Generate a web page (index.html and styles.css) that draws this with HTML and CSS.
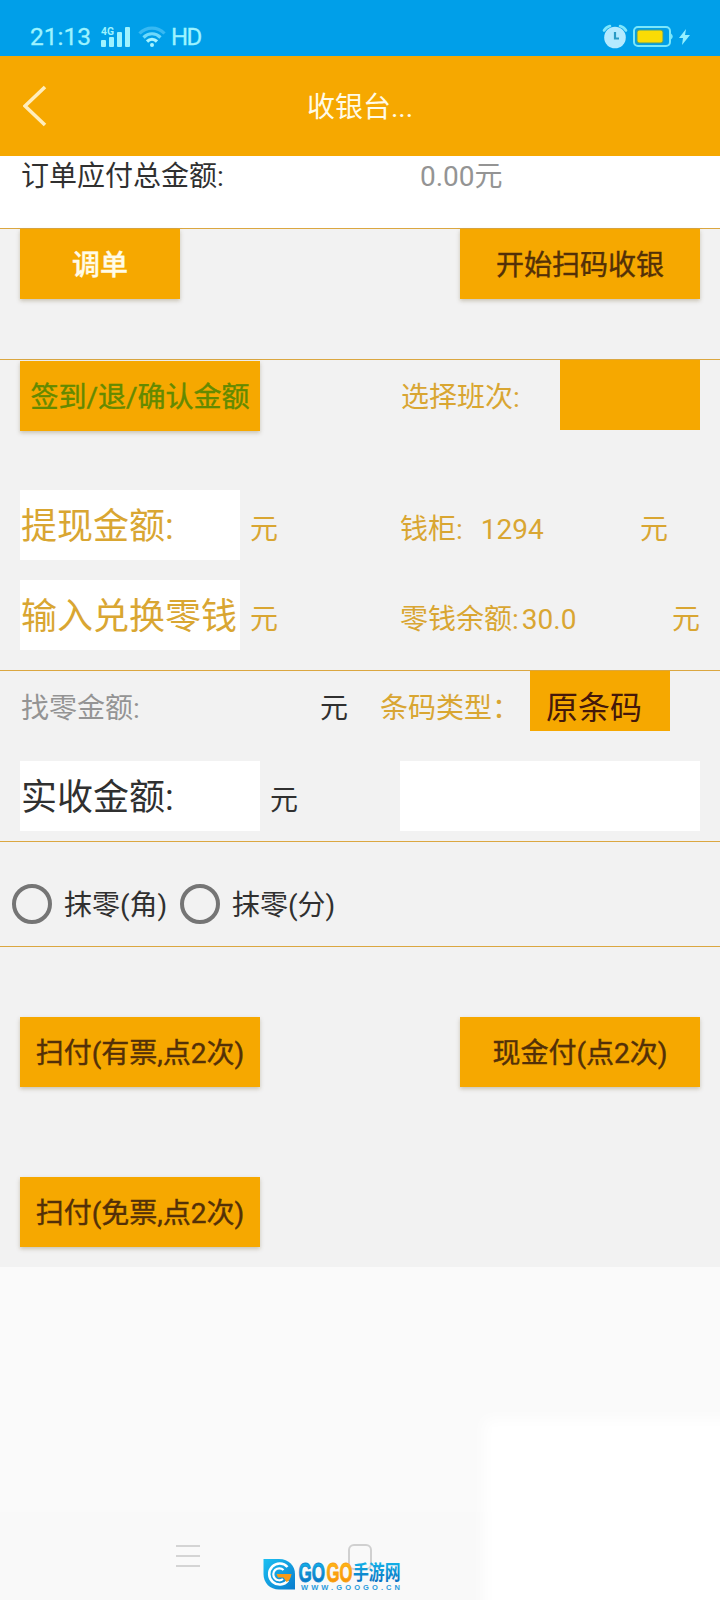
FILE: index.html
```html
<!DOCTYPE html>
<html lang="zh-CN">
<head>
<meta charset="utf-8">
<title>收银台</title>
<link rel="stylesheet" href="styles.css">
</head>
<body>
<div class="status">
  <span class="clock">21:13</span>
  <svg class="signal" width="30" height="22" viewBox="0 0 30 22">
    <text x="0" y="8.6" class="net" textLength="13" lengthAdjust="spacingAndGlyphs">4G</text>
    <rect x="0" y="14" width="5" height="7" rx="1"/><rect x="8" y="11" width="5" height="10" rx="1"/><rect x="16" y="6" width="5" height="15" rx="1"/><rect x="24" y="1" width="5" height="20" rx="1"/>
  </svg>
  <svg class="wifi" width="28" height="22" viewBox="0 0 28 22" fill="none" stroke-width="3.2">
    <path d="M1.500 7.500C8.500 .2 19.500 .2 26.500 7.500" stroke="#37b9f3"/>
    <path d="M5.500 11.500C10.500 6.500 17.500 6.500 22.500 11.500" stroke="#6fd9fb"/>
    <path d="M9 15.500C12 12.600 16 12.600 19 15.500" stroke="#a9f5ff"/>
    <circle cx="14" cy="19" r="2" fill="#a9f5ff"/>
  </svg>
  <span class="hd">HD</span>
  <svg class="power" width="92" height="28" viewBox="0 0 92 28">
    <circle cx="13" cy="15.500" r="10.800" fill="#b4eaff"/>
    <path d="M2 8.500 Q4 5 8 4M18 4Q22 5 24 8.500" fill="none" stroke="#7fe6fb" stroke-width="2.600" stroke-linecap="round"/>
    <path d="M13 10v6.500h4" fill="none" stroke="#2a9bc5" stroke-width="2.200"/>
    <rect x="32" y="5" width="36" height="19" rx="4" fill="none" stroke="#7be7fa" stroke-width="2"/>
    <path d="M69 11.500q3.500 3 0 6z" fill="#7be7fa"/>
    <rect x="34.500" y="7.500" width="27" height="14" rx="2.500" fill="#4b9e83"/><rect x="35.500" y="8.500" width="25" height="12" rx="2" fill="#fadb05"/>
    <path d="M84 7 77 16h4l-1 7 8-10h-5z" fill="#93f0ff"/>
  </svg>
</div>
<header class="header">
  <svg class="back" width="24" height="42" viewBox="0 0 24 42"><path d="M22 2 2 21 22 40" fill="none" stroke="#ffedbd" stroke-width="3.600"/></svg>
  <h1 class="title">收银台...</h1>
</header>
<main class="main">
  <section class="total"><span class="total-label">订单应付总金额:</span><span class="muted">0.00元</span></section>
  <section class="section order">
    <button class="btn btn-small">调单</button>
    <button class="btn dark">开始扫码收银</button>
  </section>
  <section class="section shift">
    <div class="row">
      <button class="btn btn-sign">签到/退/确认金额</button>
      <div class="half gold"><span class="shift-label">选择班次:</span><span class="picker"></span></div>
    </div>
    <div class="row withdraw">
      <span class="field">提现金额:</span><span class="unit">元</span>
      <div class="half gold low"><span>钱柜:</span><span class="drawer">1294</span><span class="drawer-unit">元</span></div>
    </div>
    <div class="row change">
      <span class="field">输入兑换零钱</span><span class="unit">元</span>
      <div class="half gold low"><span>零钱余额:</span><span class="balance">30.0</span><span class="balance-unit">元</span></div>
    </div>
  </section>
  <section class="section pay">
    <div class="row coderow">
      <span class="muted refund">找零金额:</span><span class="refund-unit">元</span>
      <span class="codelabel">条码类型：</span><span class="codetype">原条码</span>
    </div>
    <div class="row received">
      <span class="field wide">实收金额:</span><span class="unit ink">元</span>
      <span class="code-input"></span>
    </div>
  </section>
  <section class="section rounding">
    <span class="radio"></span><span class="radio-label">抹零(角)</span>
    <span class="radio"></span><span class="radio-label">抹零(分)</span>
  </section>
  <section class="section actions">
    <div class="pair"><button class="btn dark">扫付(有票,点2次)</button><button class="btn dark">现金付(点2次)</button></div>
    <div class="pair"><button class="btn dark">扫付(免票,点2次)</button></div>
  </section>
</main>
<footer class="footer">
  <nav class="nav">
    <svg class="menu" width="24" height="26" viewBox="0 0 24 26" stroke="#d4d4d4" stroke-width="2"><path d="M0 3h24M0 13h24M0 23h24"/></svg>
    <svg class="home" width="26" height="28" viewBox="0 0 26 28"><rect x="2" y="2" width="22" height="24" rx="5" fill="none" stroke="#d0d0d0" stroke-width="2"/></svg>
  </nav>
  <div class="glow"></div>
  <svg class="brand" width="140" height="34" viewBox="0 0 140 34">
    <defs>
      <linearGradient id="blue" x1="0" y1="0" x2="0" y2="1"><stop offset=".15" stop-color="#14b5ea"/><stop offset="1" stop-color="#0864b8"/></linearGradient>
      <linearGradient id="sky" x1="0" y1="0" x2="1" y2="1"><stop offset="0" stop-color="#1cc0f2"/><stop offset="1" stop-color="#0a7ccd"/></linearGradient>
      <linearGradient id="gold" x1="0" y1="0" x2="0" y2="1"><stop offset=".15" stop-color="#ffb917"/><stop offset="1" stop-color="#f58a05"/></linearGradient>
    </defs>
    <path d="M.5 1H16C26 1 32 8 32 16V31.500H16C7 31.500 .5 25 .5 16z" fill="url(#sky)"/>
    <path d="M24.500 9A10.500 10.500 0 1 0 25 22.500" fill="none" stroke="#fff" stroke-width="2.600"/>
    <path d="M20.500 12A6 6 0 1 0 20 21" fill="none" stroke="#fff" stroke-width="2.200"/>
    <path d="M13.500 16H28.500C28 20 26 23 23.500 24L20.500 19.500H15z" fill="#f99a16"/>
    <g class="brand-name">
      <text x="35.500" y="24" fill="url(#blue)" stroke="#0d87cf" textLength="26.500" lengthAdjust="spacingAndGlyphs">GO</text>
      <text x="63.500" y="24" fill="url(#gold)" stroke="#faa010" textLength="26" lengthAdjust="spacingAndGlyphs">GO</text>
    </g>
    <text class="brand-cn" x="90" y="22" fill="url(#blue)" textLength="47.500" lengthAdjust="spacingAndGlyphs">手游网</text>
    <text class="brand-url" x="38" y="31.500" textLength="99">WWW.GOOGO.CN</text>
  </svg>
</footer>
</body>
</html>
```
FILE: styles.css
```css
* { box-sizing: border-box; }
body {
  margin: 0;
  width: 720px;
  height: 1600px;
  overflow: hidden;
  background: #fafafa;
  color: #303030;
  font: 28px/32px Roboto, "Noto Sans CJK SC", sans-serif;
  white-space: nowrap;
}
.status { height: 56px; padding: 17px 26px 0 30px; display: flex; align-items: center; background: #009fe9; color: #9df3ff; }
.clock { font-size: 24.5px; width: 71px; -webkit-text-stroke: .3px; }
.signal { fill: #9df3ff; }
.net { font: bold 11px Roboto, sans-serif; }
.wifi { margin-left: 7px; }
.hd { font-size: 24px; margin-left: 5px; letter-spacing: -1.5px; -webkit-text-stroke: .3px; }
.power { margin: -2px 0 0 auto; }
.header { height: 100px; padding: 0 23px; display: grid; grid-template-columns: 24px 1fr 24px; align-items: center; background: #f6a800; }
.title { margin: 0; padding-top: 4px; font-size: 28px; font-weight: 400; text-align: center; color: #fffbe8; }
.total { height: 72px; padding: 5px 20px 0; display: flex; background: #fff; }
.total-label { width: 400px; padding-left: 1px; }
.muted { color: #949494; }
.section { border-top: 1px solid #dba741; background: #f2f2f2; }
.btn { width: 240px; height: 70px; padding: 4px 0 0; border: 0; background: #f6a800; font: inherit; -webkit-text-stroke: .4px; box-shadow: 0 2px 4px rgba(80, 60, 0, .25); }
.btn-small { width: 160px; color: #fffbe8; font-weight: 500; }
.btn-sign { color: #638a00; margin-top: 1px; }
.dark { color: #533008; }
.order { height: 131px; padding: 0 20px; display: flex; justify-content: space-between; }
.shift { height: 311px; padding-left: 20px; }
.row { display: flex; align-items: center; }
.shift > .row { height: 70px; }
.half { width: 320px; height: 70px; margin: 0 0 0 auto; display: flex; align-items: center; }
.shift-label { padding: 5px 0 0 1px; }
.gold { color: #d9a632; }
.low { padding-top: 9px; }
.picker { width: 140px; height: 70px; margin: 0 20px 0 auto; background: #f6a800; }
.withdraw { margin-top: 60px; }
.change { margin-top: 20px; }
.field { width: 220px; height: 70px; padding: 2px 0 0 1px; background: #fff; font-size: 36px; line-height: 70px; color: #d9a632; }
.unit { margin: 9px 0 0 10px; color: #d9a632; }
.drawer { margin-left: 18px; }
.drawer-unit { margin: 0 52px 0 auto; }
.balance { margin-left: 3px; }
.balance-unit { margin: 0 20px 0 auto; }
.pay { height: 171px; padding-left: 20px; }
.coderow { height: 60px; }
.refund { width: 300px; padding: 16px 0 0 1px; }
.refund-unit { width: 60px; padding-top: 16px; }
.codelabel { width: 150px; padding-top: 16px; color: #d9a632; }
.codetype { width: 140px; height: 60px; padding: 7px 0 0 16px; background: #f6a800; color: #45180a; font-size: 32px; line-height: 60px; }
.received { margin-top: 30px; }
.wide { width: 240px; color: #303030; }
.ink { color: #303030; }
.code-input { width: 300px; height: 70px; margin: 0 20px 0 auto; background: #fff; }
.rounding { height: 105px; padding: 20px 0 0 12px; display: flex; align-items: center; }
.radio { width: 40px; height: 40px; border: 4px solid #757575; border-radius: 50%; }
.radio-label { width: 128px; padding: 4px 0 0 12px; }
.actions { height: 321px; padding: 70px 20px 0; display: grid; grid-template-rows: 70px 70px; gap: 90px; }
.pair { display: flex; justify-content: space-between; }
.footer { position: relative; height: 333px; padding-top: 245px; }
.glow { position: absolute; left: 492px; top: 160px; width: 260px; height: 220px; background: #fff; box-shadow: 0 0 14px 8px #fff; }
.nav { height: 88px; padding: 31px 0 0 176px; display: flex; background: #f9f9f9; }
.home { margin-left: 147px; }
.brand { position: absolute; left: 263px; top: 291px; overflow: visible; }
.brand-name { font: bold 28px "Liberation Sans", sans-serif; stroke-width: .9px; }
.brand-cn { font: bold 20px "Noto Sans CJK SC", sans-serif; }
.brand-url { font: bold 7.5px "Liberation Sans", sans-serif; fill: #299bdc; }
```
